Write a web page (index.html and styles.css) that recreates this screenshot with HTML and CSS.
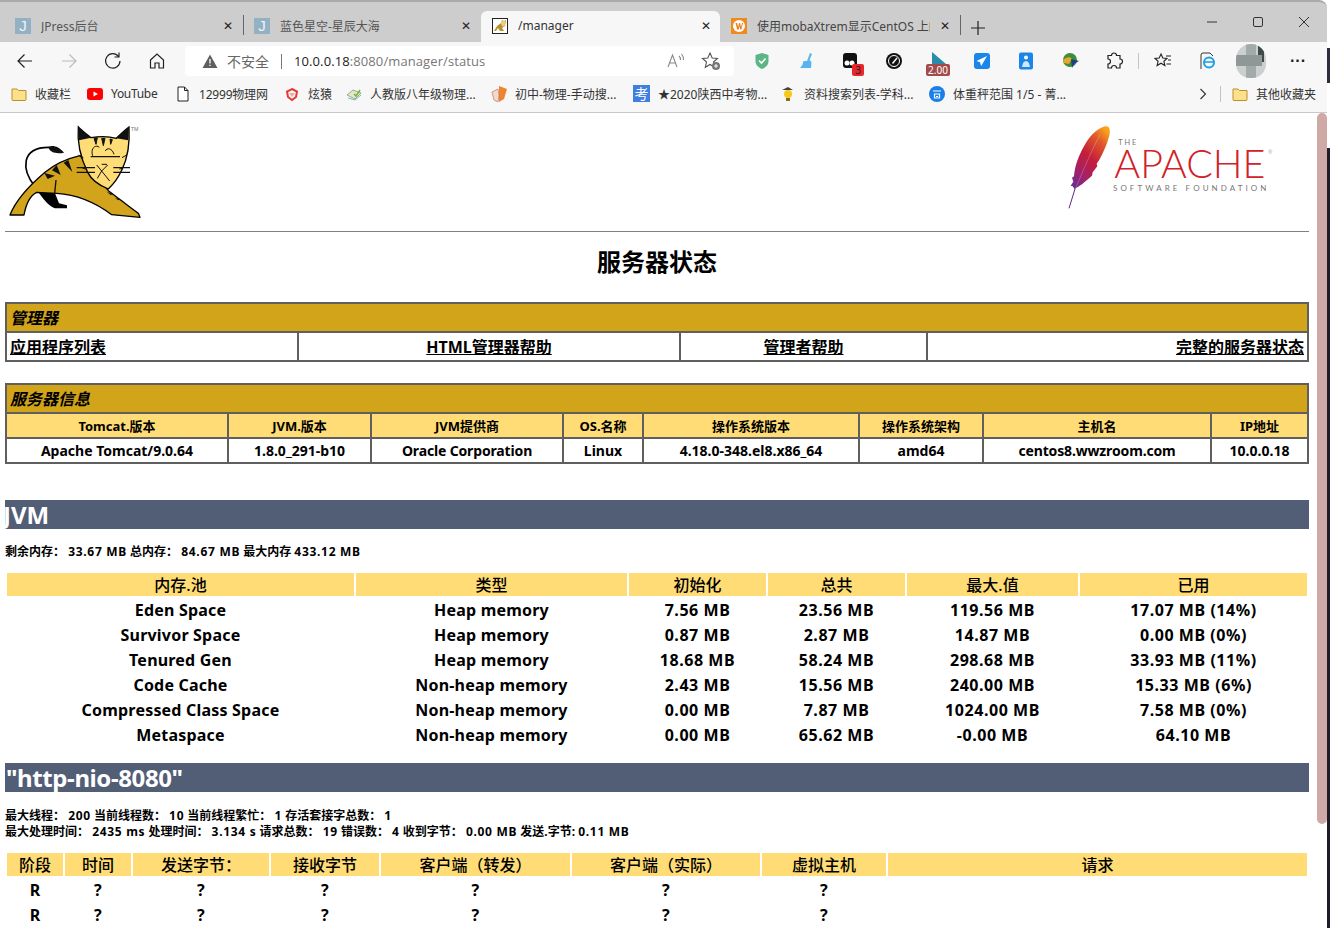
FILE: index.html
```html
<!DOCTYPE html>
<html lang="zh-CN">
<head>
  <meta charset="UTF-8">
  <meta name="viewport" content="width=device-width, initial-scale=1.0">
  <title>/manager</title>
  <link rel="stylesheet" href="styles.css">
</head>
<body>
<div id="browser">

  <!-- tab strip -->
  <div class="tab-strip">
    <div class="tab tab-first">
      <span class="tab-j">J</span><span class="tab-title">JPress后台</span><span class="tab-close">✕</span>
    </div>
    <span class="tab-sep"></span>
    <div class="tab tab-second">
      <span class="tab-j">J</span><span class="tab-title">蓝色星空-星辰大海</span><span class="tab-close">✕</span>
    </div>
    <div class="tab tab-active">
      <svg class="tab-ico" viewBox="0 0 16 16"><rect x=".5" y=".5" width="15" height="15" fill="#fff" stroke="#222"/><path d="M2 13 5 8l4-3 1-3 2 1 2-1-1 6-3 2 2 3H8L6 10l-2 3z" fill="#b8912a"/><path d="M9 3h4v4l-2 2-2-3z" fill="#e9cf85"/></svg>
      <span class="tab-title tab-title-dark">/manager</span><span class="tab-close tab-close-dark">✕</span>
    </div>
    <div class="tab tab-last">
      <svg class="tab-ico tab-ico-w" viewBox="0 0 16 16"><rect width="16" height="16" fill="#f08a1d"/><circle cx="8" cy="8" r="6" fill="#fff"/><path d="M4.500 5h1.600l1 4.300L8 5h1l1 4.300L11 5h1l-1.700 6.500H9.300L8.500 8l-.8 3.500H6.200z" fill="#e97c12"/></svg>
      <span class="tab-title tab-title-clip">使用mobaXtrem显示CentOS 上的</span><span class="tab-close">✕</span>
    </div>
    <span class="tab-sep"></span>
    <span class="new-tab">
      <svg viewBox="0 0 16 16" width="16" height="16"><path d="M8 1v14M1 8h14" stroke="#222" stroke-width="1.200" fill="none"/></svg>
    </span>
    <div class="win-controls">
      <svg viewBox="0 0 12 12" width="12" height="12"><path d="M1 6h10" stroke="#333" fill="none"/></svg>
      <svg viewBox="0 0 12 12" width="12" height="12"><rect x="1.500" y="1.500" width="9" height="9" rx="1.500" stroke="#333" fill="none"/></svg>
      <svg viewBox="0 0 12 12" width="12" height="12"><path d="M1 1l10 10M11 1 1 11" stroke="#333" fill="none"/></svg>
    </div>
  </div>

  <!-- address bar -->
  <div class="toolbar">
    <div class="nav-buttons">
      <svg viewBox="0 0 20 20" width="20" height="20"><path d="M17 10H3.500M9.500 3.500 3 10l6.500 6.500" stroke="#222" stroke-width="1.200" fill="none"/></svg>
      <svg viewBox="0 0 20 20" width="20" height="20"><path d="M3 10h13.500M10.500 3.500 17 10l-6.500 6.500" stroke="#bbb" stroke-width="1.200" fill="none"/></svg>
      <svg viewBox="0 0 20 20" width="20" height="20"><path d="M15.500 5.500A7.200 7.200 0 1 0 17 10M16 1.500v4.500h-4.500" stroke="#222" stroke-width="1.200" fill="none"/></svg>
      <svg viewBox="0 0 20 20" width="20" height="20"><path d="M3.500 9 10 3l6.500 6v8h-4.500v-5H8v5H3.500z" stroke="#222" stroke-width="1.200" fill="none"/></svg>
    </div>
    <div class="address">
      <svg class="warn-ico" viewBox="0 0 16 16" width="16" height="16"><path d="M8 1.500 15.500 15H.5z" fill="#5f5f5f"/><path d="M8 6v4.500M8 11.800v1.300" stroke="#fff" stroke-width="1.300"/></svg>
      <span class="not-secure">不安全</span>
      <span class="addr-sep"></span>
      <span class="url">10.0.0.18<span class="url-rest">:8080/manager/status</span></span>
      <span class="addr-icons">
        <svg viewBox="0 0 20 20" width="20" height="20"><path d="M2 16 6.500 4 11 16M3.600 12h5.800M13 5a5 5 0 0 1 1.500 4M15.500 3a8 8 0 0 1 2 6" stroke="#888" stroke-width="1.100" fill="none"/></svg>
        <svg viewBox="0 0 20 20" width="20" height="20"><path d="M9 2l2.200 5 5.300.5-4 3.500 1.200 5.300L9 13.500 4.300 16.300 5.500 11l-4-3.500L6.800 7z" stroke="#555" stroke-width="1.100" fill="none"/><circle cx="15" cy="15" r="4" fill="#777"/><path d="M15 13v4M13 15h4" stroke="#fff"/></svg>
      </span>
    </div>
    <div class="ext-buttons">
      <svg viewBox="0 0 20 20" width="20" height="20"><path d="M10 2 16.500 4v6c0 4-3 6.500-6.500 8C6.500 16.500 3.500 14 3.500 10V4z" fill="#5cb585"/><path d="M7 9.500 9.500 12 13.500 7.500" stroke="#fff" stroke-width="1.600" fill="none"/></svg>
      <svg viewBox="0 0 20 20" width="20" height="20"><path d="M14 2l2 1-2.500 6 2 2-.5 6H4c2-2 3-4 3.500-7l3.500 0z" fill="#58b4ee"/></svg>
      <span class="ext-badged">
        <svg viewBox="0 0 20 20" width="20" height="20"><rect x="3" y="2" width="14" height="15" rx="3" fill="#111"/><circle cx="7" cy="12" r="2.500" fill="#fff"/><circle cx="12" cy="12" r="2.500" fill="#fff"/></svg>
        <span class="badge-red">3</span>
      </span>
      <svg viewBox="0 0 20 20" width="20" height="20"><circle cx="10" cy="10" r="8" fill="#111"/><circle cx="10" cy="10" r="5.500" fill="none" stroke="#fff"/><path d="M8.500 12.500 13 7" stroke="#fff" stroke-width="1.400"/></svg>
      <span class="ext-badged">
        <svg viewBox="0 0 20 20" width="20" height="20"><path d="M4 1v12h14z" fill="#2a8bad"/></svg>
        <span class="badge-speed">2.00</span>
      </span>
      <svg viewBox="0 0 20 20" width="20" height="20"><rect x="2" y="2" width="16" height="16" rx="3" fill="#1a86e8"/><path d="M15 5 4.500 10l3.500 1.200 1.200 3.800z" fill="#fff"/></svg>
      <svg viewBox="0 0 20 20" width="20" height="20"><rect x="3" y="1.500" width="14" height="17" rx="2" fill="#1a86e8"/><circle cx="10" cy="6.500" r="2" fill="#fff"/><path d="M6 16c.5-4 2-6 4-6s3.500 2 4 6z" fill="#cfe6fb"/></svg>
      <svg viewBox="0 0 20 20" width="20" height="20"><circle cx="10" cy="9" r="7" fill="#3c8f3a"/><path d="M3 9c3-3 7-4 9-1l-3 5-5-1z" fill="#e6a72a"/><path d="M11 8 19 10 14.500 12.500 12 17z" fill="#1f3f8a"/></svg>
      <svg viewBox="0 0 20 20" width="20" height="20"><path d="M7.500 4.500a2.500 2.500 0 0 1 5 0H16v3.500a2.500 2.500 0 0 1 0 5V17h-3.500a2.500 2.500 0 0 0-5 0H4v-4a2.500 2.500 0 0 0 0-5V4.500z" stroke="#222" stroke-width="1.200" fill="none"/></svg>
      <span class="tool-sep tool-sep-ext"></span>
      <svg viewBox="0 0 20 20" width="20" height="20"><path d="M8 3l1.800 4 4.200.5-3.100 2.800 1 4.200L8 12.200 4.100 14.500l1-4.200L2 7.500 6.200 7zM13 5h5M15 9h3M13.500 13H18" stroke="#222" stroke-width="1.100" fill="none"/></svg>
      <svg viewBox="0 0 20 20" width="20" height="20"><path d="M4 18V4a2 2 0 0 1 2-2h7l3 3" stroke="#333" fill="none"/><circle cx="12" cy="11.500" r="5" fill="none" stroke="#1da1e8" stroke-width="2"/><path d="M7.500 11h9" stroke="#1da1e8" stroke-width="1.600"/></svg>
      <span class="avatar">
        <span class="avatar-dark"></span><span class="avatar-v"></span><span class="avatar-h"></span>
      </span>
      <span class="more-dots">···</span>
    </div>
  </div>

  <!-- favourites bar -->
  <div class="bookmarks">
    <span class="bm bm-folder"><svg viewBox="0 0 16 16" width="16" height="16"><path d="M1 13.500V3h5l1.500 1.500H15v9a1 1 0 0 1-1 1H2a1 1 0 0 1-1-1z" fill="#ffe08a" stroke="#b7912e"/></svg>收藏栏</span>
    <span class="bm bm-yt"><svg viewBox="0 0 16 16" width="16" height="16"><rect y="2" width="16" height="12" rx="3" fill="#f00"/><path d="M6.500 5.500v5L11 8z" fill="#fff"/></svg>YouTube</span>
    <span class="bm bm-page"><svg viewBox="0 0 16 16" width="16" height="16"><path d="M3 1h6.500L13 4.500V15H3zM9.500 1v3.500H13" fill="#fff" stroke="#222"/></svg>12999物理网</span>
    <span class="bm bm-yuan"><svg viewBox="0 0 16 16" width="16" height="16"><path d="M8 3l5 2.500L12 11l-4 3-4-3-1-5.500z" fill="none" stroke="#e33c34" stroke-width="2"/><path d="M5 7h6l-3 4z" fill="#e33c34" opacity=".4"/></svg>炫猿</span>
    <span class="bm bm-rj"><svg viewBox="0 0 16 16" width="16" height="16"><path d="M1 9l6-5 8 3-6 6z" fill="#dfe8cf" stroke="#9aaf7c"/><path d="M2 12l7 2 6-5" stroke="#7fb2cc" fill="none"/><path d="M8 8l2 2 4-6" stroke="#7bb03c" stroke-width="1.500" fill="none"/></svg>人教版八年级物理...</span>
    <span class="bm bm-sd"><svg viewBox="0 0 16 16" width="16" height="16"><path d="M8 0l8 3-3 10-5 3z" fill="#ee8430"/><path d="M1 6l6-3 1 6-1 7-4-2z" fill="#f3d9c8" stroke="#a66" stroke-width=".6"/></svg>初中-物理-手动搜...</span>
    <span class="bm bm-kao"><span class="kao-ico">考</span>★2020陕西中考物...</span>
    <span class="bm bm-zl"><svg viewBox="0 0 16 16" width="16" height="16"><path d="M2 4h11L8 1z" fill="#444"/><circle cx="8" cy="8" r="4" fill="#f6c818"/><path d="M6 12h4v3H6z" fill="#8a6d1e"/></svg>资料搜索列表-学科...</span>
    <span class="bm bm-bmi"><svg viewBox="0 0 16 16" width="16" height="16"><circle cx="8" cy="8" r="8" fill="#1a7fe8"/><path d="M4 5h8M5 8h6M5.500 8v4h5V8M7 10.500h2" stroke="#fff" stroke-width="1.200" fill="none"/></svg>体重秤范围 1/5 - 菁...</span>
    <span class="bm-end">
      <svg viewBox="0 0 12 12" width="12" height="12"><path d="M3.500 1 8.500 6l-5 5" stroke="#333" stroke-width="1.100" fill="none"/></svg>
      <span class="tool-sep"></span>
      <span class="bm"><svg viewBox="0 0 16 16" width="16" height="16"><path d="M1 13.500V3h5l1.500 1.500H15v9a1 1 0 0 1-1 1H2a1 1 0 0 1-1-1z" fill="#ffe08a" stroke="#b7912e"/></svg>其他收藏夹</span>
    </span>
  </div>

  <!-- the page itself -->
  <div class="viewport">
    <div class="page">
      <div class="logos">
        <svg class="logo-cat" viewBox="0 0 600 360" width="200" height="120" role="img" aria-label="Tomcat">
          <path d="M105 215C65 165 60 95 150 97" fill="none" stroke="#000" stroke-width="5"/>
          <path d="M145 97c8-8 30-6 47 16-20 4-42 2-47-16z" fill="#111"/>
          <path d="M115 232l50 3 12 30 24 6v9h-36c-15-5-25-15-50-48z" fill="#000"/>
          <path d="M30 300C50 250 90 210 135 172c30-25 70-42 105-50l85 105c30 22 70 55 90 68l5 12-85-8c-40-30-100-60-165-64l-60-3c-20 10-32 35-38 68z" fill="#d1a41c" stroke="#000" stroke-width="4" stroke-linejoin="round"/>
          <path d="M235 36c10 12 30 24 38 32 30-5 50-5 76 2 12-12 24-24 38-34 3 50-2 90-22 130-10 22-25 42-40 56-25-10-50-26-62-50-22-45-32-90-28-136z" fill="#fedc76" stroke="#000" stroke-width="4"/>
          <path d="M235 36c10 12 30 24 38 32l-36 8zM387 36c-14 10-26 22-38 34l36 6z" fill="#111"/>
          <path d="M305 70l5 22 5-22zM330 72l2 16 5-14zM282 70l6 18 4-20zM236 120l14 8M380 120l-14 8M248 160l10 2M368 160l-10 2" fill="#111" stroke="#111" stroke-width="3"/>
          <path d="M230 158h55M230 172h55M340 158h50M340 172h50M272 125h88" stroke="#111" stroke-width="4" fill="none"/>
          <path d="M278 122c-8-22 10-35 20-25M342 118c-6-20-22-20-26-10M305 148l16 0M290 150l15 18 18-18M292 190l13-22 24 30" stroke="#111" stroke-width="3" fill="none"/>
          <path d="M133 174l32 8-22 10zM170 150l12 30-26-14zM205 135l12 36-26-28zM320 230l12 10 8-2zM345 250l16 2-6 4z" fill="#111"/>
          <path d="M168 195l-4 40" stroke="#111" stroke-width="4" fill="none"/>
          <text x="392" y="47" class="tm-text">TM</text>
        </svg>
        <svg class="logo-apache" viewBox="0 0 840 360" width="280" height="120" role="img" aria-label="The Apache Software Foundation">
          <defs>
            <linearGradient id="feather" x1=".8" y1="0" x2=".2" y2="1">
              <stop offset="0" stop-color="#f8a21e"/>
              <stop offset=".2" stop-color="#e0582a"/>
              <stop offset=".5" stop-color="#c41e3a"/>
              <stop offset=".8" stop-color="#a3206a"/>
              <stop offset="1" stop-color="#6f2c8f"/>
            </linearGradient>
          </defs>
          <path d="M57 280 78 212" stroke="#5b2a86" stroke-width="3" fill="none"/>
          <path d="M165 34c14-4 17 12 13 28-8 28-18 50-30 72l-8 12 2 8-14 18-2 10-14 12-16 14-22 14-6-8-6-2 8-12-4-12 6-4c2-30 14-62 30-90 14-26 35-52 63-60z" fill="url(#feather)"/>
          <path d="M150 60C125 105 100 165 76 222" stroke="#fff" stroke-width="1.500" opacity=".45" fill="none"/>
          <text x="205" y="90" class="ap-the" textLength="54">THE</text>
          <text x="193" y="190" class="ap-name" textLength="453" lengthAdjust="spacingAndGlyphs">APACHE</text>
          <text x="655" y="116" class="ap-reg">®</text>
          <text x="189" y="228" class="ap-sub" textLength="460">SOFTWARE FOUNDATION</text>
        </svg>
      </div>
      <hr class="rule">
      <h1 class="page-title">服务器状态</h1>

      <table class="box-table mgr-table">
        <colgroup><col class="m1"><col class="m2"><col class="m3"><col class="m4"></colgroup>
        <tr><td colspan="4" class="box-title">管理器</td></tr>
        <tr class="link-row">
          <td class="left"><a href="#apps">应用程序列表</a></td>
          <td class="center"><a href="#html">HTML管理器帮助</a></td>
          <td class="center"><a href="#help">管理者帮助</a></td>
          <td class="right"><a href="#all">完整的服务器状态</a></td>
        </tr>
      </table>

      <table class="box-table info-table">
        <colgroup><col class="i1"><col class="i2"><col class="i3"><col class="i4"><col class="i5"><col class="i6"><col class="i7"><col class="i8"></colgroup>
        <tr><td colspan="8" class="box-title">服务器信息</td></tr>
        <tr class="info-head">
          <td>Tomcat.版本</td><td>JVM.版本</td><td>JVM提供商</td><td>OS.名称</td><td>操作系统版本</td><td>操作系统架构</td><td>主机名</td><td>IP地址</td>
        </tr>
        <tr class="info-row">
          <td>Apache Tomcat/9.0.64</td><td>1.8.0_291-b10</td><td>Oracle Corporation</td><td>Linux</td><td>4.18.0-348.el8.x86_64</td><td>amd64</td><td>centos8.wwzroom.com</td><td>10.0.0.18</td>
        </tr>
      </table>

      <h2 class="section-bar section-jvm"><span class="jvm-text">JVM</span></h2>
      <p class="stats stats-jvm">剩余内存： <span class="num">33.67 MB</span> 总内存： <span class="num">84.67 MB</span> 最大内存 <span class="num">433.12 MB</span></p>

      <table class="data-table mem-table">
        <colgroup><col class="d1"><col class="d2"><col class="d3"><col class="d4"><col class="d5"><col class="d6"></colgroup>
        <tr><th>内存.池</th><th>类型</th><th>初始化</th><th>总共</th><th>最大.值</th><th>已用</th></tr>
        <tr><td>Eden Space</td><td>Heap memory</td><td>7.56 MB</td><td>23.56 MB</td><td>119.56 MB</td><td>17.07 MB (14%)</td></tr>
        <tr><td>Survivor Space</td><td>Heap memory</td><td>0.87 MB</td><td>2.87 MB</td><td>14.87 MB</td><td>0.00 MB (0%)</td></tr>
        <tr><td>Tenured Gen</td><td>Heap memory</td><td>18.68 MB</td><td>58.24 MB</td><td>298.68 MB</td><td>33.93 MB (11%)</td></tr>
        <tr><td>Code Cache</td><td>Non-heap memory</td><td>2.43 MB</td><td>15.56 MB</td><td>240.00 MB</td><td>15.33 MB (6%)</td></tr>
        <tr><td>Compressed Class Space</td><td>Non-heap memory</td><td>0.00 MB</td><td>7.87 MB</td><td>1024.00 MB</td><td>7.58 MB (0%)</td></tr>
        <tr><td>Metaspace</td><td>Non-heap memory</td><td>0.00 MB</td><td>65.62 MB</td><td>-0.00 MB</td><td>64.10 MB</td></tr>
      </table>

      <h2 class="section-bar section-http">"http-nio-8080"</h2>
      <p class="stats stats-http">最大线程： <span class="num">200</span> 当前线程数： <span class="num">10</span> 当前线程繁忙： <span class="num">1</span> 存活套接字总数： <span class="num">1</span><br>最大处理时间： <span class="num">2435 ms</span> 处理时间： <span class="num">3.134 s</span> 请求总数： <span class="num">19</span> 错误数： <span class="num">4</span> 收到字节： <span class="num">0.00 MB</span> 发送.字节: <span class="num">0.11 MB</span></p>

      <table class="data-table req-table">
        <colgroup><col class="r1"><col class="r2"><col class="r3"><col class="r4"><col class="r5"><col class="r6"><col class="r7"><col class="r8"></colgroup>
        <tr><th>阶段</th><th>时间</th><th>发送字节：</th><th>接收字节</th><th>客户端（转发）</th><th>客户端（实际）</th><th>虚拟主机</th><th>请求</th></tr>
        <tr><td>R</td><td>?</td><td>?</td><td>?</td><td>?</td><td>?</td><td>?</td><td></td></tr>
        <tr><td>R</td><td>?</td><td>?</td><td>?</td><td>?</td><td>?</td><td>?</td><td></td></tr>
      </table>
    </div>
    <div class="scroll-thumb"></div>
    <div class="window-edge"></div>
  </div>
  <div class="window-edge-top"></div>
</div>
</body>
</html>
```

FILE: styles.css
```css
html, body {
  margin: 0;
  height: 100%;
  overflow: hidden;
}

body {
  font-family: "Noto Sans", "Noto Sans CJK SC", sans-serif;
  background: #fff;
  color: #000;
}

#browser {
  position: relative;
  display: flex;
  flex-direction: column;
  height: 928px;
}

/* tabs */
.tab-strip {
  display: flex;
  height: 42px;
  flex: none;
  margin-right: 3px;
  align-items: flex-end;
  background: #cdcdcd;
  border-top: 2px solid #a9a9a9;
  border-radius: 0 8px 0 0;
  box-sizing: border-box;
}

.tab {
  display: flex;
  align-items: center;
  height: 31px;
  box-sizing: border-box;
  flex: none;
  padding-bottom: 2px;
}

.tab-first { width: 243px; padding-left: 15px; }
.tab-second { width: 237px; padding-left: 10px; }
.tab-active {
  width: 239px;
  padding-left: 11px;
  background: #f7f7f7;
  border-radius: 6px 6px 0 0;
}
.tab-last { width: 240px; padding-left: 11px; }

.tab-sep {
  flex: none;
  width: 1px;
  height: 20px;
  margin-bottom: 7px;
  background: #666;
}

.tab-j {
  width: 16px;
  height: 16px;
  background: #94b1c4;
  color: #eef3f6;
  font: 15px/16px "Liberation Sans", sans-serif;
  text-align: center;
  flex: none;
}

.tab-ico {
  width: 16px;
  height: 16px;
  flex: none;
}

.tab-title {
  margin-left: 10px;
  font-size: 12px;
  color: #555;
  flex: 1;
  white-space: nowrap;
  overflow: hidden;
}

.tab-title-dark { color: #333; }
.tab-title-clip { color: #444; margin-right: 10px; }

.tab-close {
  width: 10px;
  margin-right: 10px;
  font: 12px/12px "DejaVu Sans", sans-serif;
  color: #222;
}

.tab-active .tab-close { margin-right: 9px; }

.new-tab {
  display: flex;
  align-items: center;
  justify-content: center;
  height: 29px;
  padding-left: 9px;
}

.win-controls {
  display: flex;
  gap: 34px;
  margin-left: auto;
  margin-right: 17px;
  align-self: flex-start;
  margin-top: 14px;
}

/* address bar */
.toolbar {
  display: flex;
  align-items: center;
  height: 38px;
  flex: none;
  margin-right: 3px;
  background: #f7f7f7;
}

.nav-buttons {
  display: flex;
  gap: 24px;
  padding-left: 15px;
  width: 185px;
  box-sizing: border-box;
  flex: none;
}

.address {
  display: flex;
  align-items: center;
  width: 549px;
  height: 30px;
  background: #fff;
  border-radius: 4px;
  flex: none;
  padding-left: 17px;
  box-sizing: border-box;
  font-size: 14px;
}

.warn-ico { margin-right: 9px; }

.not-secure { color: #666; font-size: 14px; }

.addr-sep {
  width: 1px;
  height: 15px;
  background: #777;
  margin: 0 12px;
}

.url {
  color: #222;
  font-size: 13px;
  letter-spacing: .1px;
  font-family: "Open Sans", "Noto Sans CJK SC", sans-serif;
}
.url-rest { color: #777; }

.addr-icons {
  display: flex;
  gap: 15px;
  margin-left: auto;
  margin-right: 13px;
}

.ext-buttons {
  display: flex;
  align-items: center;
  gap: 24px;
  margin-left: 18px;
}

.ext-badged { position: relative; display: block; width: 20px; height: 20px; }

.badge-red {
  position: absolute;
  right: -4px;
  bottom: -5px;
  width: 12px;
  height: 12px;
  background: #e8262c;
  border-radius: 2px;
  color: #222;
  font-size: 10px;
  line-height: 12px;
  text-align: center;
}

.badge-speed {
  position: absolute;
  left: -2px;
  bottom: -5px;
  width: 24px;
  height: 12px;
  background: #a34a4a;
  border-radius: 2px;
  color: #fff;
  font-size: 10px;
  line-height: 12px;
  text-align: center;
}

.tool-sep {
  width: 1px;
  height: 16px;
  background: #c4c4c4;
}

.tool-sep-ext { margin: 0 -10px; }

.avatar {
  position: relative;
  display: block;
  width: 30px;
  height: 34px;
  border-radius: 15px 15px 14px 14px;
  background: #c9d0ce;
  overflow: hidden;
  margin: 0 -5px;
  flex: none;
}

.avatar-dark {
  position: absolute;
  top: 2px;
  right: 2px;
  width: 6px;
  height: 16px;
  background: #3e4a47;
  border-radius: 0 6px 0 0;
}

.avatar-v {
  position: absolute;
  top: 0;
  left: 10px;
  width: 10px;
  height: 34px;
  background: #a3abaa;
}

.avatar-h {
  position: absolute;
  top: 11px;
  left: 0;
  width: 26px;
  height: 11px;
  background: #8f9896;
}

.more-dots {
  font: bold 16px/16px "Liberation Sans", sans-serif;
  color: #222;
  margin-left: 5px;
}

/* favourites */
.bookmarks {
  display: flex;
  align-items: center;
  height: 33px;
  flex: none;
  margin-right: 3px;
  background: #f7f7f7;
  border-bottom: 1px solid #c9c9c9;
  box-sizing: border-box;
  padding: 0 0 5px 11px;
  font-size: 12px;
  color: #333;
}

.bm {
  display: flex;
  align-items: center;
  gap: 8px;
  white-space: nowrap;
  flex: none;
}

.bm-folder { width: 76px; }
.bm-yt { width: 88px; letter-spacing: -.3px; }
.bm-page { width: 109px; letter-spacing: -.2px; }
.bm-yuan { width: 62px; }
.bm-rj { width: 145px; }
.bm-sd { width: 142px; }
.bm-kao { width: 147px; }
.bm-zl { width: 149px; }
.bm-bmi { width: 180px; }

.kao-ico {
  display: block;
  width: 17px;
  height: 17px;
  background: #3f7fe0;
  color: #fff;
  font-size: 14px;
  line-height: 17px;
  text-align: center;
}

.bm-end {
  display: flex;
  align-items: center;
  gap: 11px;
  margin-left: 88px;
}

/* page */
.viewport {
  position: relative;
  flex: 1;
  overflow: hidden;
  background: #fff;
}

.page {
  width: 1304px;
  margin-left: 5px;
}

.logos {
  display: flex;
  justify-content: space-between;
  height: 118px;
  margin-left: -5px;
}

.logo-cat { margin-top: 2px; }
.logo-apache { margin-top: 2px; margin-right: -21px; }

.tm-text { font: 16px "Liberation Sans", sans-serif; fill: #777; }
.ap-the { font: 22px "Lato", sans-serif; fill: #777; }
.ap-name { font: 300 117px "Lato", sans-serif; fill: #d22128; }
.ap-reg { font: 16px "Liberation Sans", sans-serif; fill: #999; }
.ap-sub { font: 24px "Lato", sans-serif; fill: #777; }

.rule {
  height: 1px;
  margin: 0;
  border: 0;
  background: #808080;
}

.page-title {
  margin: 14px 0 24px;
  height: 32px;
  font-size: 24px;
  line-height: 32px;
  font-weight: bold;
  text-align: center;
}

.box-table {
  width: 1302px;
  table-layout: fixed;
  border-collapse: collapse;
  border: 2px solid #5f5f5f;
  font-weight: bold;
}

.box-table td {
  border: 2px solid #5f5f5f;
  padding: 0;
}

.box-table .box-title {
  background: #d1a41a;
  height: 26px;
  padding: 1px 0 0 3px;
  font-size: 16px;
  font-style: italic;
  line-height: 26px;
}

.box-table .link-row td {
  height: 26px;
  padding: 0 3px 1px;
  font-size: 16px;
}

.link-row a { color: #000; }

.left { text-align: left; }
.center { text-align: center; }
.right { text-align: right; }

.m1 { width: 292px; }
.m2 { width: 382px; }
.m3 { width: 247px; }
.m4 { width: 381px; }

.info-table { margin-top: 21px; }
.info-table td { text-align: center; font-size: 13px; }
.info-table .box-title { text-align: left; font-size: 16px; }
.info-head td { background: #ffdc75; height: 23px; }
.info-row td { height: 23px; font-size: 14px; }
.info-row td:nth-child(3), .info-row td:nth-child(7) { letter-spacing: -.15px; }

.i1 { width: 222px; }
.i2 { width: 143px; }
.i3 { width: 192px; }
.i4 { width: 80px; }
.i5 { width: 216px; }
.i6 { width: 124px; }
.i7 { width: 228px; }
.i8 { width: 97px; }

.section-bar {
  height: 29px;
  margin: 0;
  background: #525d76;
  color: #fff;
  font-size: 24px;
  line-height: 29px;
  font-weight: bold;
}

.section-jvm { margin-top: 36px; overflow: hidden; }
.section-http { margin-top: 15px; padding-left: 1px; letter-spacing: -.4px; }
.jvm-text { margin-left: -2px; }

.stats {
  margin: 0;
  font-size: 12px;
  line-height: 16px;
  font-weight: bold;
}

.num { letter-spacing: .7px; }

.stats-jvm { margin-top: 15px; margin-bottom: 11px; }
.stats-http { margin-top: 16px; margin-bottom: 11px; }

.data-table {
  width: 1304px;
  table-layout: fixed;
  border-collapse: separate;
  border-spacing: 2px;
  font-size: 16px;
  font-weight: bold;
  text-align: center;
}

.data-table th {
  background: #ffdc75;
  height: 22px;
  padding: 1px 0 0;
  font-weight: 500;
  line-height: 22px;
}

.data-table td {
  height: 22px;
  padding: 1px 0 0;
  line-height: 22px;
  letter-spacing: .2px;
}

.mem-table td:nth-child(n+3) { letter-spacing: .55px; }

.d1 { width: 347px; }
.d2 { width: 271px; }
.d3 { width: 137px; }
.d4 { width: 137px; }
.d5 { width: 171px; }
.d6 { width: 227px; }

.r1 { width: 56px; }
.r2 { width: 66px; }
.r3 { width: 136px; }
.r4 { width: 108px; }
.r5 { width: 189px; }
.r6 { width: 188px; }
.r7 { width: 124px; }
.r8 { width: 419px; }

.scroll-thumb {
  position: absolute;
  top: 0;
  left: 1317px;
  width: 10px;
  height: 711px;
  background: #d0a8a6;
  border-radius: 5px;
}

.window-edge {
  position: absolute;
  top: 35px;
  right: 0;
  width: 3px;
  bottom: 0;
  background: #1c1c2a;
}

.window-edge-top {
  position: absolute;
  top: 48px;
  right: 0;
  width: 3px;
  height: 35px;
  background: #2c2c3e;
}
```
